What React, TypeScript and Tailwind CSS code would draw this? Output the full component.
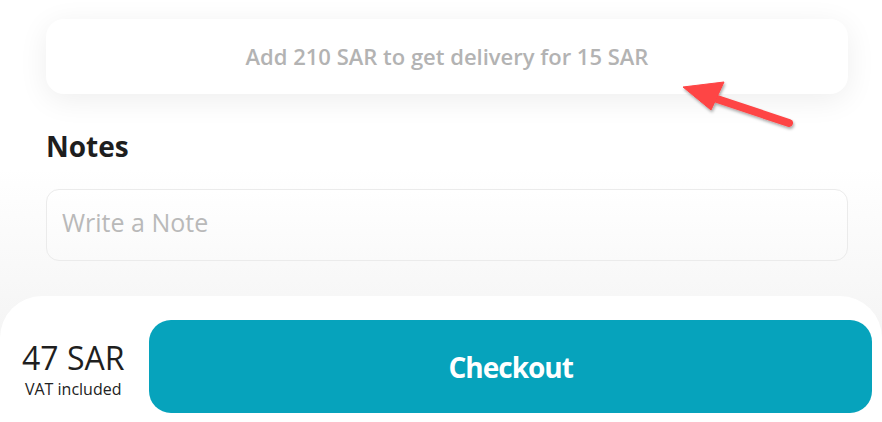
const App = () => {
  return (
    <div
      className="relative w-[882px] h-[422px] overflow-hidden bg-gradient-to-b from-white from-40% to-[#efefef] text-[#222]"
      style={{ fontFamily: '"Open Sans", sans-serif' }}
    >
      <div className="flex flex-col pl-[46px] pr-[34px] pt-[19px]">
        <div className="flex h-[75px] items-center justify-center rounded-[18px] bg-white shadow-[0_6px_30px_rgba(0,0,0,0.07)]">
          <span className="text-[22px] font-semibold text-[#b3b3b3]">
            Add 210 SAR to get delivery for 15 SAR
          </span>
        </div>

        <h2 className="mt-[33px] text-[28px] font-bold leading-[38px] text-[#1e1e1e]">
          Notes
        </h2>

        <div className="mt-[24px] flex h-[72px] items-center rounded-[13px] border border-[#ebebeb] bg-gradient-to-b from-white to-[#fafafa] px-[15px] pb-[4px]">
          <input
            type="text"
            placeholder="Write a Note"
            className="w-full bg-transparent text-[25px] outline-none placeholder:text-[#b9b9b9]"
          />
        </div>
      </div>

      <div className="absolute left-0 right-0 top-[296px] flex h-[140px] items-start gap-[25px] rounded-t-[42px] bg-white pl-[22px] pr-[10px] pt-[24px]">
        <div className="flex flex-col items-center pt-[20px]">
          <span className="text-[32px] leading-[36px] text-[#1f1f1f]">47 SAR</span>
          <span className="mt-[2px] text-[16px] leading-[22px] text-[#222]">VAT included</span>
        </div>
        <button className="flex h-[93px] flex-1 items-center justify-center rounded-[22px] bg-[#06a3bc] text-[28px] font-bold tracking-[-1px] text-white">
          Checkout
        </button>
      </div>

      <svg
        className="absolute left-[676px] top-[78px]"
        width="130"
        height="60"
        viewBox="0 0 130 60"
      >
        <defs>
          <filter id="sh" x="-20%" y="-40%" width="140%" height="180%">
            <feDropShadow dx="1" dy="2" stdDeviation="1.5" floodColor="#000" floodOpacity="0.35" />
          </filter>
        </defs>
        <g filter="url(#sh)" fill="#fe4444" stroke="#fe4444">
          <line x1="38" y1="20" x2="113" y2="45" strokeWidth="8" strokeLinecap="round" />
          <polygon points="7,9 48,4 35,32" strokeWidth="1" strokeLinejoin="round" />
        </g>
      </svg>
    </div>
  );
};

export default App;
